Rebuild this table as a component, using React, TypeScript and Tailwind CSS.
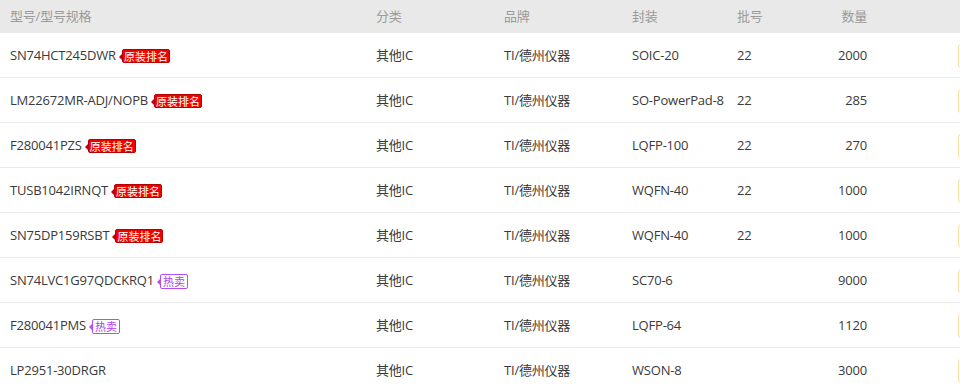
import React from "react";

type Row = {
  model: string;
  tag?: "rank" | "hot";
  category: string;
  brand: string;
  pkg: string;
  batch: string;
  qty: string;
};

const rows: Row[] = [
  { model: "SN74HCT245DWR", tag: "rank", category: "其他IC", brand: "TI/德州仪器", pkg: "SOIC-20", batch: "22", qty: "2000" },
  { model: "LM22672MR-ADJ/NOPB", tag: "rank", category: "其他IC", brand: "TI/德州仪器", pkg: "SO-PowerPad-8", batch: "22", qty: "285" },
  { model: "F280041PZS", tag: "rank", category: "其他IC", brand: "TI/德州仪器", pkg: "LQFP-100", batch: "22", qty: "270" },
  { model: "TUSB1042IRNQT", tag: "rank", category: "其他IC", brand: "TI/德州仪器", pkg: "WQFN-40", batch: "22", qty: "1000" },
  { model: "SN75DP159RSBT", tag: "rank", category: "其他IC", brand: "TI/德州仪器", pkg: "WQFN-40", batch: "22", qty: "1000" },
  { model: "SN74LVC1G97QDCKRQ1", tag: "hot", category: "其他IC", brand: "TI/德州仪器", pkg: "SC70-6", batch: "", qty: "9000" },
  { model: "F280041PMS", tag: "hot", category: "其他IC", brand: "TI/德州仪器", pkg: "LQFP-64", batch: "", qty: "1120" },
  { model: "LP2951-30DRGR", category: "其他IC", brand: "TI/德州仪器", pkg: "WSON-8", batch: "", qty: "3000" },
];

const grid = "grid grid-cols-[366px_128px_128px_105px_85px_65px_1fr]";

const Tag = ({ kind }: { kind: "rank" | "hot" }) => {
  if (kind === "rank") {
    return (
      <span className="relative ml-[6px] inline-flex h-[14px] items-center rounded-[2px] border border-[#b80000] bg-[#f00000] px-[1px] text-[11px] leading-none tracking-normal text-white">
        <span className="absolute left-[-4px] top-[4px] h-0 w-0 border-y-[3px] border-r-[3px] border-y-transparent border-r-[#c00000]" />
        原装排名
      </span>
    );
  }
  return (
    <span className="relative ml-[6px] inline-flex h-[15px] items-center rounded-[2px] border border-[#b84cf2] bg-white px-[2px] text-[11px] leading-none tracking-normal text-[#b040ee]">
      <span className="absolute left-[-4px] top-[4px] h-0 w-0 border-y-[3px] border-r-[3px] border-y-transparent border-r-[#b84cf2]" />
      热卖
    </span>
  );
};

export default function App() {
  return (
    <div
      className="h-[388px] w-[960px] overflow-hidden bg-white text-[13px] tracking-[-0.2px] text-[#3a3a3a]"
      style={{ fontFamily: '"Open Sans", "Noto Sans CJK SC", sans-serif' }}
    >
      <div className={`${grid} h-[33px] items-center bg-[#e9e9e9] text-[#9a9a9a]`}>
        <div className="pl-[10px]">型号/型号规格</div>
        <div className="pl-[10px]">分类</div>
        <div className="pl-[10px]">品牌</div>
        <div className="pl-[10px]">封装</div>
        <div className="pl-[10px]">批号</div>
        <div className="pr-[10px] text-right">数量</div>
        <div />
      </div>
      {rows.map((r, i) => (
        <div key={i} className={`${grid} h-[45px] items-center border-b border-[#ebebeb] pt-[2px]`}>
          <div className="flex items-center pl-[10px]">
            <span>{r.model}</span>
            {r.tag && <Tag kind={r.tag} />}
          </div>
          <div className="pl-[10px]">{r.category}</div>
          <div className="pl-[10px]">{r.brand}</div>
          <div className="pl-[10px]">{r.pkg}</div>
          <div className="pl-[10px]">{r.batch}</div>
          <div className="pr-[10px] text-right">{r.qty}</div>
          <div className="pl-[81px]">
            <div className="h-[24px] w-[60px] rounded-[3px] border border-[#f5e0a8] bg-[#fffdf6]" />
          </div>
        </div>
      ))}
    </div>
  );
}
